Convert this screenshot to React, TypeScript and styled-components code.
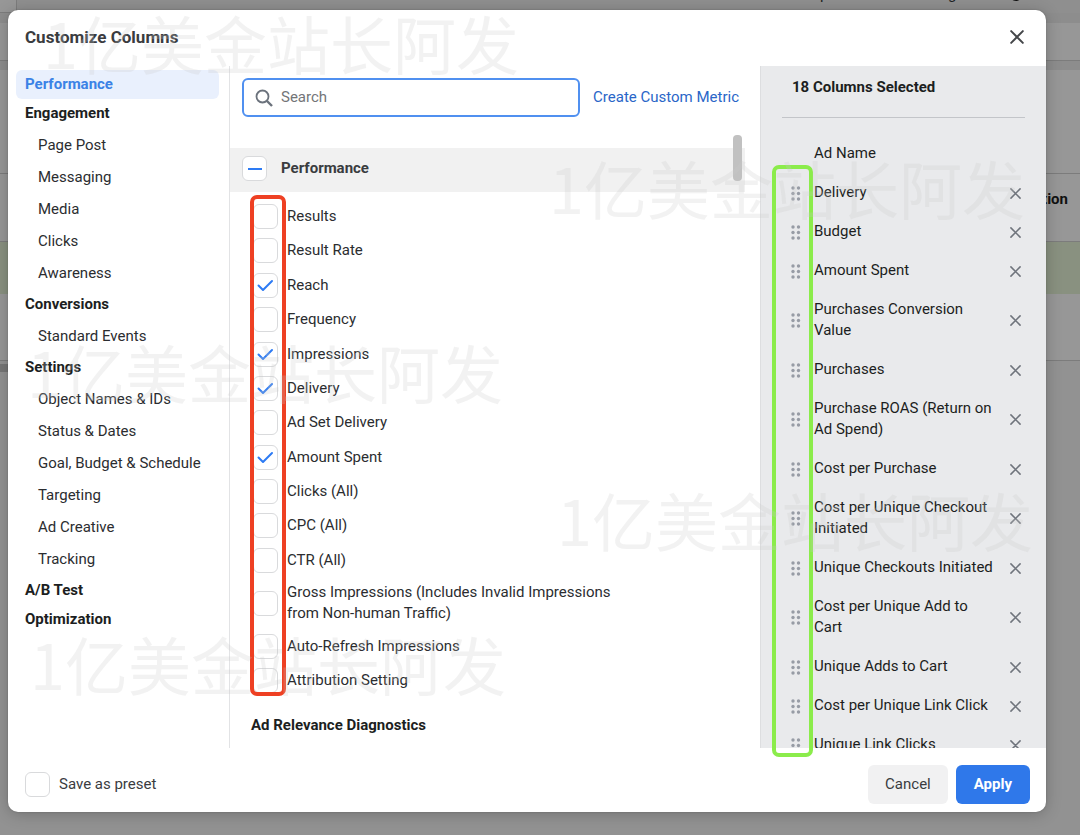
import React from 'react';
import styled, { createGlobalStyle, css } from 'styled-components';

const GlobalStyle = createGlobalStyle`
  * { box-sizing: border-box; }
  html, body, #root { height: 100%; }
  body {
    margin: 0;
    overflow: hidden;
    background: #8f8f8f;
    font-family: Roboto, "Noto Sans CJK SC", sans-serif;
    font-size: 15px;
    line-height: 21px;
    color: #1c1e21;
  }
  button, input { font: inherit; color: inherit; }
  ul { list-style: none; margin: 0; padding: 0; }
  h2, h3, h4, p { margin: 0; font-size: inherit; font-weight: 700; }
`;

const Page = styled.div`
  position: relative;
  min-height: 100%;
  display: flex;
  overflow: hidden;
`;

/* Dimmed ads table behind the dialog */
const Backdrop = styled.div`
  position: absolute;
  inset: 0;
  display: flex;
  flex-direction: column;
  overflow: hidden;
  background: #929292;
`;

const TopStrip = styled.div`
  display: flex;
  flex: none;
  align-items: flex-end;
  gap: 44px;
  height: 13px;
  padding-right: 57px;
  background: #8f8f8f;
`;

const StripTab = styled.span`
  width: 17px;
  height: 13px;
  margin-right: auto;
  border: solid #7c7c7c;
  border-width: 0 1px 1px 0;
  background: #979797;
`;

const Updated = styled.span`
  height: 29px;
`;

const RefreshIcon = styled.svg`
  width: 14px;
  height: 14px;
  margin-bottom: 11px;
`;

const Band = styled.div<{ $h: number; $bg: string; $line?: boolean }>`
  flex: none;
  height: ${(p) => p.$h}px;
  background: ${(p) => p.$bg};
  border-bottom: ${(p) => (p.$line ? '1px solid #7c7c7c' : '0')};
`;

const ColumnHead = styled.div`
  padding: 15px 12px 0 0;
  text-align: right;
  font-weight: 700;
  color: #111;
`;

const TableScrollThumb = styled.div`
  flex: none;
  width: 40%;
  height: 8px;
  margin-top: 3px;
  background: #777;
`;

const Dialog = styled.section`
  position: relative;
  flex: 1;
  display: flex;
  flex-direction: column;
  margin: 10px 34px 23px 8px;
  background: #fff;
  border-radius: 10px;
  box-shadow: 0 2px 16px rgba(0, 0, 0, 0.22), 0 0 2px rgba(0, 0, 0, 0.2);
`;

const Header = styled.header`
  display: flex;
  flex: none;
  align-items: center;
  justify-content: space-between;
  height: 56px;
  padding: 0 22px 2px 17px;
`;

const Title = styled.h2`
  font-size: 17px;
  font-weight: 700;
  color: #3a3c3f;
`;

const IconButton = styled.button`
  display: flex;
  flex: none;
  align-items: center;
  justify-content: center;
  width: 14px;
  height: 16px;
  padding: 0;
  border: 0;
  background: none;
`;

const Body = styled.div`
  flex: 1;
  min-height: 0;
  display: grid;
  grid-template-columns: 222px 1fr 286px;
`;

const Sidebar = styled.nav`
  padding: 4px 10px 0 8px;
  border-right: 1px solid #e2e3e5;
`;

const NavHeading = styled.a<{ $active?: boolean }>`
  display: block;
  height: 29px;
  padding: 4px 9px;
  border-radius: 6px;
  font-weight: 700;
  text-decoration: none;
  color: ${(p) => (p.$active ? '#3b82e6' : '#1c1e21')};
  background: ${(p) => (p.$active ? '#e9f0fd' : 'transparent')};
`;

const NavSubList = styled.ul`
  padding-top: 2px;
`;

const NavLink = styled.a`
  display: block;
  height: 32px;
  padding: 5px 0 6px 22px;
  text-decoration: none;
  color: #2b2d30;
`;

const Main = styled.main`
  position: relative;
  display: flex;
  flex-direction: column;
  min-height: 0;
`;

const SearchRow = styled.div`
  display: flex;
  flex: none;
  align-items: center;
  gap: 13px;
  padding: 12px 21px 0 12px;
`;

const SearchBox = styled.label`
  display: flex;
  flex: 1;
  align-items: center;
  gap: 8px;
  height: 39px;
  padding: 0 12px 0 11px;
  border: 2px solid #5090f0;
  border-radius: 6px;
`;

const SearchInput = styled.input`
  flex: 1;
  min-width: 0;
  padding: 0;
  border: 0;
  outline: 0;
  background: none;
  &::placeholder { color: #737578; opacity: 1; }
`;

const MetricLink = styled.a`
  text-decoration: none;
  color: #2a66c8;
`;

const ScrollRegion = styled.div`
  position: relative;
  flex: 1;
  min-height: 0;
  display: flex;
  margin-top: 18px;
`;

const ScrollContent = styled.div`
  flex: 1;
  min-width: 0;
  display: flex;
  flex-direction: column;
  padding-top: 13px;
`;

const ScrollThumb = styled.div`
  position: absolute;
  top: 0;
  right: 18px;
  width: 9px;
  height: 46px;
  border-radius: 4px;
  background: #c1c1c1;
`;

const GroupBar = styled.div`
  display: flex;
  flex: none;
  align-items: center;
  gap: 14px;
  height: 44px;
  margin-right: 15px;
  padding: 0 12px 3px;
  background: #f1f1f1;
  color: #3a3c3f;
`;

const mixedMark = css`
  background-image: linear-gradient(#2d7bf4, #2d7bf4);
  background-size: 14px 2px;
  background-position: center;
  background-repeat: no-repeat;
`;

const Check = styled.span`
  position: relative;
  display: flex;
  flex: none;
  width: 25px;
  height: 25px;
  svg {
    position: absolute;
    inset: 0;
    display: none;
    pointer-events: none;
  }
  input:checked + svg { display: block; }
`;

const CheckInput = styled.input<{ $mixed?: boolean }>`
  appearance: none;
  width: 100%;
  height: 100%;
  margin: 0;
  border: 1px solid #d9dadc;
  border-radius: 6px;
  background-color: #fff;
  ${(p) => p.$mixed && mixedMark}
`;

const MetricArea = styled.div`
  position: relative;
  flex: 1;
  display: flex;
  flex-direction: column;
  padding: 12px 21px 12px 23px;
`;

const MetricList = styled.ul`
  flex: 1;
  display: flex;
  flex-direction: column;
  justify-content: space-between;
`;

const MetricLabel = styled.label`
  display: flex;
  align-items: center;
  gap: 9px;
  max-width: 374px;
  color: #2b2d30;
`;

const SubHeading = styled.h4`
  padding-top: 22px;
  margin-left: -2px;
`;

const Frame = styled.div<{ $color: string }>`
  position: absolute;
  border: 4px solid ${(p) => p.$color};
  border-radius: 7px;
  pointer-events: none;
`;

const MetricsFrame = styled(Frame)`
  top: 3px;
  bottom: 52px;
  left: 20px;
  width: 36px;
`;

const HandlesFrame = styled(Frame)`
  top: 99px;
  bottom: -9px;
  left: 11px;
  width: 41px;
`;

const Selected = styled.aside`
  position: relative;
  min-height: 0;
  display: flex;
  flex-direction: column;
  border-left: 1px solid #dddee0;
  background: #e9eaec;
`;

const SelectedClip = styled.div`
  flex: 1 1 0;
  min-height: 0;
  overflow: hidden;
  padding: 0 21px;
`;

const SelectedTitle = styled.h3`
  height: 52px;
  margin-bottom: 17px;
  padding: 11px 10px 0;
  border-bottom: 1px solid #c3c5c9;
`;

const SelectedRow = styled.li`
  display: grid;
  grid-template-columns: 10px 181px 14px;
  column-gap: 13px;
  align-items: center;
  padding: 8px 0 9px 9px;
`;

const SelectedName = styled.span`
  grid-column: 2;
  padding-bottom: 1px;
`;

const Footer = styled.footer`
  display: flex;
  flex: none;
  align-items: center;
  justify-content: space-between;
  height: 64px;
  padding: 9px 16px 0 17px;
`;

const PresetLabel = styled.label`
  display: flex;
  align-items: center;
  gap: 9px;
  color: #3a3c3f;
`;

const Actions = styled.div`
  display: flex;
  gap: 8px;
`;

const ActionButton = styled.button<{ $primary?: boolean }>`
  height: 39px;
  padding: 0 ${(p) => (p.$primary ? 18 : 17)}px;
  border: 0;
  border-radius: 6px;
  font-weight: ${(p) => (p.$primary ? 700 : 400)};
  color: ${(p) => (p.$primary ? '#fff' : '#3a3c3f')};
  background: ${(p) => (p.$primary ? '#2f78ea' : '#f1f1f2')};
`;

const Watermark = styled.span<{ $x: number; $y: number }>`
  position: absolute;
  left: ${(p) => p.$x}px;
  top: ${(p) => p.$y}px;
  font-family: "Noto Sans CJK SC", sans-serif;
  font-size: 63px;
  line-height: 64px;
  white-space: nowrap;
  color: rgba(200, 200, 200, 0.24);
  pointer-events: none;
`;

type NavGroup = { title: string; items: string[] };

const nav: NavGroup[] = [
  { title: 'Performance', items: [] },
  { title: 'Engagement', items: ['Page Post', 'Messaging', 'Media', 'Clicks', 'Awareness'] },
  { title: 'Conversions', items: ['Standard Events'] },
  {
    title: 'Settings',
    items: ['Object Names & IDs', 'Status & Dates', 'Goal, Budget & Schedule', 'Targeting', 'Ad Creative', 'Tracking'],
  },
  { title: 'A/B Test', items: [] },
  { title: 'Optimization', items: [] },
];

const metrics: [string, boolean][] = [
  ['Results', false],
  ['Result Rate', false],
  ['Reach', true],
  ['Frequency', false],
  ['Impressions', true],
  ['Delivery', true],
  ['Ad Set Delivery', false],
  ['Amount Spent', true],
  ['Clicks (All)', false],
  ['CPC (All)', false],
  ['CTR (All)', false],
  ['Gross Impressions (Includes Invalid Impressions from Non-human Traffic)', false],
  ['Auto-Refresh Impressions', false],
  ['Attribution Setting', false],
];

const selected = [
  'Delivery',
  'Budget',
  'Amount Spent',
  'Purchases Conversion Value',
  'Purchases',
  'Purchase ROAS (Return on Ad Spend)',
  'Cost per Purchase',
  'Cost per Unique Checkout Initiated',
  'Unique Checkouts Initiated',
  'Cost per Unique Add to Cart',
  'Unique Adds to Cart',
  'Cost per Unique Link Click',
  'Unique Link Clicks',
];

const watermarks = [
  { x: 43, y: 10 },
  { x: 549, y: 155 },
  { x: 27, y: 339 },
  { x: 557, y: 487 },
  { x: 30, y: 631 },
];

const Cross = ({ size, color }: { size: number; color: string }) => (
  <svg width={size} height={size} viewBox="0 0 12 12" fill="none" stroke={color} strokeWidth="1.7" strokeLinecap="round" aria-hidden="true">
    <path d="M1 1l10 10M11 1L1 11" />
  </svg>
);

const Grip = () => (
  <svg width="10" height="15" viewBox="0 0 10 15" fill="#979ca5" aria-hidden="true">
    {[2, 7.5, 13].map((y) => (
      <React.Fragment key={y}>
        <circle cx="2" cy={y} r="1.7" />
        <circle cx="7.5" cy={y} r="1.7" />
      </React.Fragment>
    ))}
  </svg>
);

const Checkbox = ({ checked, mixed, label }: { checked?: boolean; mixed?: boolean; label?: string }) => (
  <Check>
    <CheckInput type="checkbox" defaultChecked={checked} $mixed={mixed} aria-label={label} />
    <svg viewBox="0 0 25 25" fill="none" stroke="#2d7bf4" strokeWidth="2" strokeLinecap="round" strokeLinejoin="round" aria-hidden="true">
      <path d="M5.5 12.5l4.500 4.500L19 8" />
    </svg>
  </Check>
);

export default function App() {
  return (
    <>
      <GlobalStyle />
      <Page>
        <Backdrop aria-hidden="true">
          <TopStrip>
            <StripTab />
            <Updated>Last updated 3 minutes ago</Updated>
            <RefreshIcon viewBox="0 0 14 14" fill="none" stroke="#111" strokeWidth="2">
              <path d="M12 7a5 5 0 1 1-2-4" />
            </RefreshIcon>
          </TopStrip>
          <Band $h={10} $bg="#8d8d8d" />
          <Band $h={38} $bg="#979797" $line />
          <Band $h={9} $bg="#8d8d8d" />
          <Band $h={104} $bg="#979797" $line />
          <Band $h={68} $bg="#979797" $line>
            <ColumnHead>Attribution</ColumnHead>
          </Band>
          <Band $h={52} $bg="#899180" />
          <Band $h={67} $bg="#979797" $line />
          <TableScrollThumb />
        </Backdrop>

        <Dialog role="dialog" aria-label="Customize Columns">
          <Header>
            <Title>Customize Columns</Title>
            <IconButton type="button" aria-label="Close">
              <Cross size={14} color="#444649" />
            </IconButton>
          </Header>

          <Body>
            <Sidebar>
              {nav.map((group, i) => (
                <React.Fragment key={group.title}>
                  <NavHeading href="#" $active={i === 0}>{group.title}</NavHeading>
                  {group.items.length > 0 && (
                    <NavSubList>
                      {group.items.map((item) => (
                        <li key={item}><NavLink href="#">{item}</NavLink></li>
                      ))}
                    </NavSubList>
                  )}
                </React.Fragment>
              ))}
            </Sidebar>

            <Main>
              <SearchRow>
                <SearchBox>
                  <svg width="18" height="18" viewBox="0 0 18 18" fill="none" stroke="#6b727c" strokeWidth="1.8" aria-hidden="true">
                    <circle cx="7.5" cy="7.5" r="6" />
                    <path d="M12 12l5 5" strokeWidth="2.4" />
                  </svg>
                  <SearchInput type="text" placeholder="Search" aria-label="Search" />
                </SearchBox>
                <MetricLink href="#">Create Custom Metric</MetricLink>
              </SearchRow>

              <ScrollRegion>
                <ScrollContent>
                  <GroupBar>
                    <Checkbox mixed label="All performance metrics" />
                    <h3>Performance</h3>
                  </GroupBar>
                  <MetricArea>
                    <MetricList>
                      {metrics.map(([name, on]) => (
                        <li key={name}>
                          <MetricLabel>
                            <Checkbox checked={on} />
                            <span>{name}</span>
                          </MetricLabel>
                        </li>
                      ))}
                    </MetricList>
                    <SubHeading>Ad Relevance Diagnostics</SubHeading>
                    <MetricsFrame $color="#ee4023" />
                  </MetricArea>
                </ScrollContent>
                <ScrollThumb />
              </ScrollRegion>
            </Main>

            <Selected>
              <SelectedClip>
                <SelectedTitle>18 Columns Selected</SelectedTitle>
                <ul>
                  <SelectedRow>
                    <SelectedName>Ad Name</SelectedName>
                  </SelectedRow>
                  {selected.map((name) => (
                    <SelectedRow key={name}>
                      <Grip />
                      <SelectedName>{name}</SelectedName>
                      <IconButton type="button" aria-label={`Remove ${name}`}>
                        <Cross size={11} color="#6f747c" />
                      </IconButton>
                    </SelectedRow>
                  ))}
                </ul>
              </SelectedClip>
              <HandlesFrame $color="#8bec4b" />
            </Selected>
          </Body>

          <Footer>
            <PresetLabel>
              <Checkbox />
              Save as preset
            </PresetLabel>
            <Actions>
              <ActionButton type="button">Cancel</ActionButton>
              <ActionButton type="button" $primary>Apply</ActionButton>
            </Actions>
          </Footer>
        </Dialog>

        {watermarks.map((w) => (
          <Watermark key={`${w.x}-${w.y}`} $x={w.x} $y={w.y} aria-hidden="true">1亿美金站长阿发</Watermark>
        ))}
      </Page>
    </>
  );
}
